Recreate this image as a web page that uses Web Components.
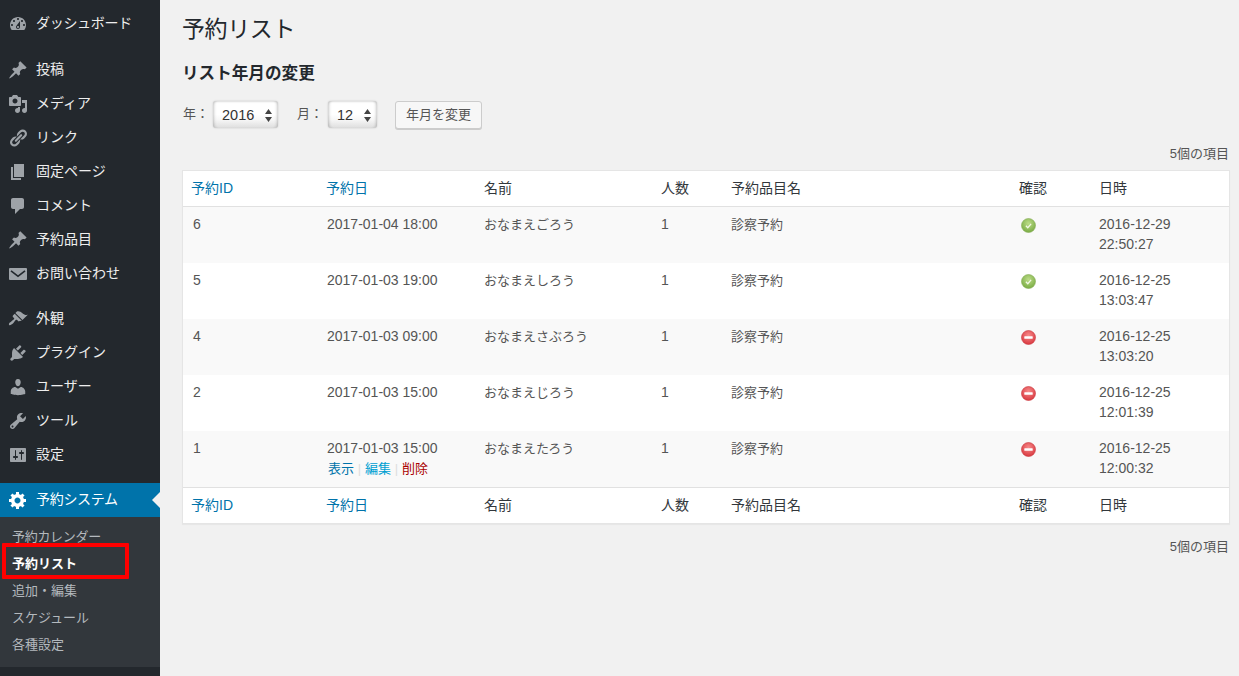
<!DOCTYPE html>
<html lang="ja"><head><meta charset="utf-8"><title>予約リスト</title>
<style>
html,body{margin:0;padding:0;height:100%;overflow:hidden;background:#f1f1f1}
body{font-family:"Liberation Sans","Noto Sans CJK JP",sans-serif;font-size:13px;color:#444}
</style></head><body>
<wp-shell>
  <wp-sidebar slot="side">
    <wp-item icon="dashboard" style="margin-bottom:12px;letter-spacing:-.3px">ダッシュボード</wp-item>
    <wp-item icon="pin">投稿</wp-item>
    <wp-item icon="media">メディア</wp-item>
    <wp-item icon="links">リンク</wp-item>
    <wp-item icon="page">固定ページ</wp-item>
    <wp-item icon="comments">コメント</wp-item>
    <wp-item icon="pin">予約品目</wp-item>
    <wp-item icon="email" style="margin-bottom:11px">お問い合わせ</wp-item>
    <wp-item icon="appearance">外観</wp-item>
    <wp-item icon="plugins">プラグイン</wp-item>
    <wp-item icon="users">ユーザー</wp-item>
    <wp-item icon="tools">ツール</wp-item>
    <wp-item icon="settings" style="margin-bottom:11px">設定</wp-item>
    <wp-item icon="generic" active style="letter-spacing:-.3px">予約システム</wp-item>
    <wp-submenu>
      <wp-subitem style="letter-spacing:-.3px">予約カレンダー</wp-subitem>
      <wp-subitem current>予約リスト</wp-subitem>
      <wp-subitem>追加・編集</wp-subitem>
      <wp-subitem>スケジュール</wp-subitem>
      <wp-subitem>各種設定</wp-subitem>
    </wp-submenu>
  </wp-sidebar>
  <wp-page>
    <wp-form-bar></wp-form-bar>
    <wp-count>5個の項目</wp-count>
    <res-table>
      <res-row head></res-row>
      <res-row rid="6" date="2017-01-04 18:00" name="おなまえごろう" st="ok" d="2016-12-29" t="22:50:27" alt></res-row>
      <res-row rid="5" date="2017-01-03 19:00" name="おなまえしろう" st="ok" d="2016-12-25" t="13:03:47"></res-row>
      <res-row rid="4" date="2017-01-03 09:00" name="おなまえさぶろう" st="no" d="2016-12-25" t="13:03:20" alt></res-row>
      <res-row rid="2" date="2017-01-03 15:00" name="おなまえじろう" st="no" d="2016-12-25" t="12:01:39"></res-row>
      <res-row rid="1" date="2017-01-03 15:00" name="おなまえたろう" st="no" d="2016-12-25" t="12:00:32" alt actions></res-row>
      <res-row head foot></res-row>
    </res-table>
    <wp-count bottom>5個の項目</wp-count>
  </wp-page>
</wp-shell>
<script>
const ICONS={
dashboard:"M3.76 16h12.48c1.1-1.37 1.76-3.11 1.76-5 0-4.42-3.58-8-8-8s-8 3.58-8 8c0 1.89.66 3.63 1.76 5zM10 4c.55 0 1 .45 1 1s-.45 1-1 1-1-.45-1-1 .45-1 1-1zM6 6c.55 0 1 .45 1 1s-.45 1-1 1-1-.45-1-1 .45-1 1-1zm8 0c.55 0 1 .45 1 1s-.45 1-1 1-1-.45-1-1 .45-1 1-1zm-5.37 5.55L12 7v6c0 1.1-.9 2-2 2s-2-.9-2-2c0-.57.24-1.08.63-1.45zM4 10c.55 0 1 .45 1 1s-.45 1-1 1-1-.45-1-1 .45-1 1-1zm12 0c.55 0 1 .45 1 1s-.45 1-1 1-1-.45-1-1 .45-1 1-1zm-5 3c0-.55-.45-1-1-1s-1 .45-1 1 .45 1 1 1 1-.45 1-1z",
pin:"M10.44 3.02l1.82-1.82 6.36 6.35-1.83 1.82c-1.05-.68-2.48-.57-3.41.36l-.75.75c-.92.93-1.04 2.35-.35 3.41l-1.83 1.82-2.41-2.41-2.8 2.79c-.42.42-3.38 2.71-3.8 2.29s1.86-3.39 2.28-3.81l2.79-2.79L4.1 9.36l1.83-1.82c1.05.69 2.48.57 3.4-.36l.75-.75c.93-.92 1.05-2.35.36-3.41z",
media:"M13 11V4c0-.55-.45-1-1-1h-1.67L9 1H5L3.67 3H2c-.55 0-1 .45-1 1v7c0 .55.45 1 1 1h10c.55 0 1-.45 1-1zM7 4.5c1.38 0 2.5 1.12 2.5 2.5S8.38 9.5 7 9.5 4.5 8.38 4.5 7 5.62 4.5 7 4.5zM14 6h5v10.5c0 1.38-1.12 2.5-2.5 2.5S14 17.88 14 16.5s1.12-2.5 2.5-2.5c.17 0 .34.02.5.05V9h-3V6zm-4 8.05V13h2v3.5c0 1.38-1.12 2.5-2.5 2.5S7 17.88 7 16.5 8.12 14 9.5 14c.17 0 .34.02.5.05z",
links:"M17.74 2.76c1.68 1.69 1.68 4.41 0 6.1l-1.53 1.52c-1.12 1.12-2.7 1.47-4.14 1.09l2.62-2.61.76-.77.76-.76c.84-.84.84-2.2 0-3.04-.84-.85-2.2-.85-3.04 0l-.77.76-3.38 3.38c-.37-1.44-.02-3.02 1.1-4.14l1.52-1.53c1.69-1.68 4.42-1.68 6.1 0zM8.59 13.43l5.34-5.34c.42-.42.42-1.1 0-1.52-.44-.43-1.13-.39-1.53 0l-5.33 5.34c-.42.42-.42 1.1 0 1.52.44.43 1.13.39 1.52 0zm-.76 2.29l4.14-4.15c.38 1.44.03 3.02-1.09 4.14l-1.52 1.53c-1.69 1.68-4.41 1.68-6.1 0-1.68-1.68-1.68-4.42 0-6.1l1.53-1.52c1.12-1.12 2.7-1.47 4.14-1.1l-4.14 4.15c-.85.84-.85 2.2 0 3.05.84.84 2.2.84 3.04 0z",
page:"M6 15V2h10v13H6zm-1 1h8v2H3V5h2v11z",
comments:"M5 2h9c1.1 0 2 .9 2 2v7c0 1.1-.9 2-2 2h-2l-5 5v-5H5c-1.1 0-2-.9-2-2V4c0-1.1.9-2 2-2z",
email:"M2 4h16a1 1 0 0 1 1 1v10a1 1 0 0 1-1 1H2a1 1 0 0 1-1-1V5a1 1 0 0 1 1-1zM3.5 6.2L2.5 7.5l7.5 5.7 7.5-5.7-1-1.3-6.5 5z",
appearance:"M14.48 11.06L7.41 3.99l1.5-1.5c.5-.56 2.3-.47 3.51.32 1.21.8 1.43 1.28 2.91 2.1 1.18.64 2.45 1.26 4.45.85zm-.71.71L6.7 4.7 4.93 6.47c-.39.39-.39 1.02 0 1.41l1.06 1.06c.39.39.39 1.03 0 1.42-.6.6-1.43 1.11-2.21 1.69-.35.26-.7.53-1.01.84C1.43 13.23.4 15.17 1.14 15.9c.73.73 2.67-.3 4.01-1.65.3-.3.58-.66.84-1.01.58-.78 1.09-1.61 1.69-2.21.39-.39 1.02-.39 1.41 0l1.06 1.06c.39.39 1.02.39 1.41 0z",
plugins:"M13.11 4.36L9.87 7.6 8 5.73l3.24-3.24c.35-.34 1.05-.2 1.56.32.52.51.66 1.21.31 1.55zm-8 1.77l.91-1.12 9.01 9.01-1.19.84c-.71.71-2.63 1.16-3.82 1.16H6.14L4.9 17.26c-.59.59-1.54.59-2.12 0-.59-.58-.59-1.53 0-2.12l1.24-1.24v-3.88c0-1.13.4-3.19 1.09-3.89zm7.26 3.97l3.24-3.24c.34-.35 1.04-.21 1.55.31.52.51.66 1.21.31 1.55l-3.24 3.25z",
users:"M10 9.25c-2.27 0-2.73-3.44-2.73-3.44C7 4.02 7.82 2 9.97 2c2.16 0 2.98 2.02 2.71 3.81 0 0-.41 3.44-2.68 3.44zm0 2.57L12.72 10c2.39 0 4.52 2.33 4.52 4.53v2.49s-3.65 1.13-7.24 1.13c-3.65 0-7.24-1.13-7.24-1.13v-2.49c0-2.25 1.94-4.48 4.47-4.48z",
tools:"M16.68 9.77c-1.34 1.34-3.3 1.67-4.95.99l-5.41 6.52c-.99.99-2.59.99-3.58 0s-.99-2.59 0-3.57l6.52-5.42c-.68-1.65-.35-3.61.99-4.95 1.28-1.28 3.12-1.62 4.72-1.06l-2.89 2.89 2.82 2.82 2.86-2.87c.53 1.58.18 3.39-1.08 4.65zM3.81 16.21c.4.39 1.04.39 1.43 0 .4-.4.4-1.04 0-1.43-.39-.4-1.03-.4-1.43 0-.39.39-.39 1.03 0 1.43z",
settings:"M18 16V4c0-.55-.45-1-1-1H3c-.55 0-1 .45-1 1v12c0 .55.45 1 1 1h14c.55 0 1-.45 1-1zM8 11h1c.55 0 1 .45 1 1s-.45 1-1 1H8v1.5c0 .28-.22.5-.5.5s-.5-.22-.5-.5V13H6c-.55 0-1-.45-1-1s.45-1 1-1h1V5.5c0-.28.22-.5.5-.5s.5.22.5.5V11zm5-2h-1c-.55 0-1-.45-1-1s.45-1 1-1h1V5.5c0-.28.22-.5.5-.5s.5.22.5.5V7h1c.55 0 1 .45 1 1s-.45 1-1 1h-1v5.5c0 .28-.22.5-.5.5s-.5-.22-.5-.5V9z",
generic:"M18 12h-2.18c-.17.7-.44 1.35-.81 1.93l1.54 1.54-2.1 2.1-1.54-1.54c-.58.36-1.23.63-1.91.79V19H8v-2.18c-.68-.16-1.33-.43-1.91-.79l-1.54 1.54-2.12-2.12 1.54-1.54c-.36-.58-.63-1.23-.79-1.91H1V9.03h2.17c.16-.7.44-1.35.8-1.94L2.43 5.55l2.1-2.1 1.54 1.54c.58-.37 1.24-.64 1.93-.81V2h3v2.18c.68.16 1.33.43 1.91.79l1.54-1.54 2.12 2.12-1.54 1.54c.36.59.64 1.24.8 1.94H18V12zm-8.5 1.5c1.66 0 3-1.34 3-3s-1.34-3-3-3-3 1.34-3 3 1.34 3 3 3z"
};
function def(name,html,init){
  customElements.define(name,class extends HTMLElement{
    constructor(){super();this.attachShadow({mode:"open"});}
    connectedCallback(){this.shadowRoot.innerHTML=typeof html==="function"?html(this):html;if(init)init(this);}
  });
}
def("wp-shell",`<style>:host{display:flex;height:676px;width:1239px;overflow:hidden}</style><slot name="side"></slot><slot></slot>`);
def("wp-sidebar",`<style>:host{display:block;flex:0 0 160px;width:160px;height:100%;background:#23282d;padding-top:7px;box-sizing:border-box}</style><slot></slot>`);
def("wp-item",e=>`<style>
:host{display:flex;align-items:center;height:34px;color:${e.hasAttribute("active")?"#fff":"#eee"};font-size:14px;line-height:18px;position:relative;background:${e.hasAttribute("active")?"#0073aa":"transparent"}}
svg{flex:0 0 20px;width:20px;height:20px;margin:0 8px;fill-rule:evenodd;fill:${e.hasAttribute("active")?"#fff":"#9ea3a8"}}
.t{padding-bottom:2px}
.tip{position:absolute;right:0;top:50%;margin-top:-8px;border:8px solid transparent;border-right-color:#f1f1f1;border-left:0}
</style><svg viewBox="0 0 20 20"><path d="${ICONS[e.getAttribute("icon")]}"/></svg><span class="t"><slot></slot></span>${e.hasAttribute("active")?'<span class="tip"></span>':''}`);
def("wp-submenu",`<style>:host{display:block;background:#32373c;padding:7px 0 8px}</style><slot></slot>`);
def("wp-subitem",e=>`<style>
:host{display:block;height:27px;line-height:25px;padding-left:12px;font-size:13px;position:relative;color:${e.hasAttribute("current")?"#fff":"#b4b9be"};font-weight:${e.hasAttribute("current")?700:400}}
.mark{position:absolute;left:2px;top:-8px;width:127px;height:36px;border:4px solid #f00;box-sizing:border-box;border-radius:1px}
</style><slot></slot>${e.hasAttribute("current")?'<span class="mark"></span>':''}`);
def("wp-page",`<style>:host{display:block;flex:1;padding:0 9px 0 22px;min-width:0;color:#444}</style><slot></slot>`);
def("wp-form-bar",`<style>
:host{display:block}
h1{margin:0;padding:14px 0 0;font-size:23px;letter-spacing:-.4px;line-height:31px;font-weight:400;color:#23282d}
h2{margin:0;padding:18px 0 0;font-size:16.6px;line-height:22px;font-weight:700;color:#23282d}
.bar{display:flex;align-items:center;margin-top:15px;height:29px;padding-left:1px;color:#555;font-size:13px}
.l{margin-top:-4px;width:30px}
</style><h1>予約リスト</h1><h2>リスト年月の変更</h2>
<div class="bar"><span class="l">年：</span><mac-select style="width:65px">2016</mac-select><span class="l" style="width:31px;margin-left:19px">月：</span><mac-select style="width:49px">12</mac-select><wp-button style="margin-left:18px">年月を変更</wp-button></div>`);
def("mac-select",`<style>
:host{display:flex;align-items:center;box-sizing:border-box;height:27px;border-radius:3px;padding:1px 6px 0 9px;font-size:14.5px;color:#333;justify-content:space-between;
background:linear-gradient(#fff 50%,#f6f6f6 70%,#dedede);box-shadow:inset 3px 0 3px -2px rgba(0,0,0,.22),inset -3px 0 3px -2px rgba(0,0,0,.22),inset 0 2px 2px -1px rgba(0,0,0,.12),0 0 2px rgba(0,0,0,.18)}
svg{width:7px;height:13px;fill:#444;display:block}
</style><slot></slot><svg viewBox="0 0 7 13"><path d="M3.5 0L7 5H0zM0 8h7L3.5 13z"/></svg>`);
def("wp-button",`<style>
:host{display:block;box-sizing:border-box;width:87px;height:28px;line-height:25px;text-align:center;font-size:13px;color:#555;background:#f7f7f7;border:1px solid #ccc;border-radius:3px;box-shadow:0 1px 0 #ccc}
</style><slot></slot>`);
def("wp-count",e=>`<style>
:host{display:block;text-align:right;font-size:13px;line-height:18px;color:#555;padding-right:1px;${e.hasAttribute("bottom")?"margin-top:14px":"margin-top:16px;margin-bottom:7px"}}
</style><slot></slot>`);
def("res-table",`<style>:host{display:block;background:#fff;border:1px solid #e5e5e5;box-shadow:0 1px 1px rgba(0,0,0,.04)}</style><slot></slot>`);
const GRID="grid-template-columns:134px 157px 177px 70px 288px 80px 1fr";
const statusIcon=s=>s==="ok"
 ?`<svg width="15" height="15" viewBox="0 0 15 15" style="display:block;margin-left:2px"><defs><radialGradient id="g" cx=".5" cy=".35" r=".7"><stop offset="0" stop-color="#bcdc88"/><stop offset="1" stop-color="#74a83e"/></radialGradient></defs><circle cx="7.5" cy="7.5" r="7" fill="url(#g)" stroke="#86ad58" stroke-width=".6"/><path d="M4.9 7.8l1.9 1.9 3.3-3.9" fill="none" stroke="#f2f8e6" stroke-width="1.3"/></svg>`
 :`<svg width="15" height="15" viewBox="0 0 15 15" style="display:block;margin-left:2px"><defs><radialGradient id="r" cx=".5" cy=".35" r=".7"><stop offset="0" stop-color="#f78a8a"/><stop offset="1" stop-color="#d6323a"/></radialGradient></defs><circle cx="7.5" cy="7.5" r="7" fill="url(#r)" stroke="#c9363c" stroke-width=".6"/><rect x="3.3" y="6.2" width="8.4" height="2.6" rx=".6" fill="#fff"/></svg>`;
def("res-row",e=>{
 const a=n=>e.getAttribute(n)||"";
 const base=`<style>
 :host{display:grid;${GRID};box-sizing:border-box;}
 div{padding:0 10px;box-sizing:border-box;min-width:0}
 a{color:#0073aa;text-decoration:none}
 .n{font-size:14px}
 .up{display:block;margin-top:-1px;margin-bottom:1px}
 .act{display:flex;font-size:13px;line-height:20px;padding-left:1px;white-space:nowrap;color:#ddd}
 .act i{width:11px;text-align:center;font-style:normal}
 </style>`;
 if(e.hasAttribute("head")){
  const foot=e.hasAttribute("foot");
  return base+`<style>:host{height:36px;padding-bottom:2px;${foot?"border-top:1px solid #e1e1e1":"border-bottom:1px solid #e1e1e1"};font-size:14px;line-height:20px;color:#32373c;align-items:center}</style>
  <div style="padding-left:8px"><a>予約ID</a></div><div style="padding-left:9px"><a>予約日</a></div><div>名前</div><div>人数</div><div>予約品目名</div><div>確認</div><div>日時</div>`;
 }
 return base+`<style>:host{height:56px;padding-top:8px;font-size:13px;line-height:20px;color:#555;background:${e.hasAttribute("alt")?"#f9f9f9":"#fff"}}</style>
 <div><span class="n up">${a("rid")}</span></div>
 <div><span class="n up">${a("date")}</span>${e.hasAttribute("actions")?`<span class="act"><a>表示</a><i>|</i><a style="color:#00a0d2">編集</a><i>|</i><a style="color:#a00">削除</a></span>`:""}</div>
 <div>${a("name")}</div><div><span class="n up">1</span></div><div>診察予約</div>
 <div style="padding-top:3px">${statusIcon(a("st"))}</div>
 <div><span class="n up">${a("d")}<br>${a("t")}</span></div>`;
});
</script>
</body></html>
